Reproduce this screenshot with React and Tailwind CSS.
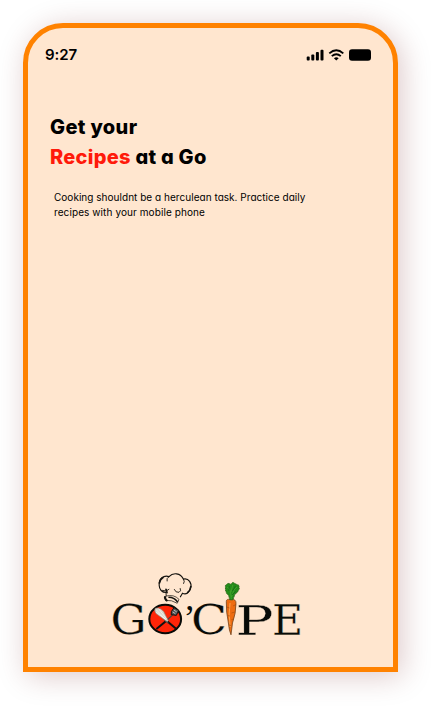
function StatusIcons() {
  return (
    <svg className="h-3.5 w-[66px]" viewBox="0 0 66 14" fill="none" aria-label="Signal, wifi and battery">
      <g fill="#000">
        <rect x="0.7" y="8.6" width="3" height="3.8" rx="0.9" />
        <rect x="5.3" y="6.5" width="3" height="5.9" rx="0.9" />
        <rect x="9.9" y="4.1" width="3" height="8.3" rx="0.9" />
        <rect x="14.5" y="1.8" width="3" height="10.6" rx="0.9" />
        <path d="M30.3 12.4L27.9 10.2Q30.3 8.2 32.7 10.2Z" />
        <rect x="43" y="1.3" width="22" height="11.5" rx="3" />
      </g>
      <path d="M23.3 5.4Q30.3-.8 37.3 5.4M25.8 8.1Q30.3 4.2 34.8 8.1" stroke="#000" strokeWidth="1.9" />
    </svg>
  );
}

function Logo() {
  return (
    <svg className="h-20 w-[205px]" viewBox="0 0 205 80" fill="none" aria-label="Go'cipe">
      <g fill="#080b08" stroke="#ffe6cf" strokeWidth="0.25" fontFamily="'DejaVu Serif', serif" fontSize="41">
        <text transform="translate(5.6 68.6) scale(1.1 1)">G</text>
        <text transform="translate(86.1 68.6) scale(1.15 1)">C</text>
        <text transform="translate(130.4 69.8) scale(1.38 1)">P</text>
        <text transform="translate(167 70) scale(1.04 1.03)">E</text>
      </g>
      <text x="78.4" y="65" fill="#080b08" fontFamily="'Liberation Serif', serif" fontSize="36">’</text>

      <ellipse cx="60.2" cy="54" rx="15.9" ry="14.2" fill="#ff2508" stroke="#080b08" strokeWidth="2" />
      <g strokeLinecap="round">
        <path d="M60.5 56.5L52 63.5M62.5 56.5L70.5 63.2" stroke="#111" strokeWidth="2" />
        <path d="M67.5 50L60.5 56.5M58 53L63 58" stroke="#4b4742" strokeWidth="1.1" />
      </g>
      <path d="M50.3 43.3Q54.8 41.7 58.7 46.4L63.3 55.8Q62.7 57.4 60.5 55.4L51.2 48.7Q48.8 46 50.3 43.3Z" fill="#d8d5c9" stroke="#8b8275" strokeWidth=".6" />
      <path d="M51 44.5L61 55M53.5 43.5L61.5 54M51 47L60 54" stroke="#fff" strokeWidth=".6" />
      <path d="M69 42.7L73.8 45.3L71.3 50.4L66.2 49.6L66.4 46.5Z" fill="#555" stroke="#111" />
      <path d="M68.8 45L71.8 47M67.7 47L70.4 48.7" stroke="#ddd" strokeWidth=".7" />

      <g stroke="#15130f" strokeLinecap="round" strokeLinejoin="round">
        <path d="M61 27.5C57 27.5 54.3 24.5 54.2 20.5C53.5 14 58.5 9.8 64 11.6C68 7.2 75.5 7.8 78.4 14.1C83.8 12.8 87.2 18.4 85.6 23C84.8 27.6 81 30 77.5 28.2L75.4 31.8" strokeWidth="1.15" />
        <path d="M61 27.5L61.2 31M57.5 25.5Q61.5 27.3 64 24.4M64 11.6Q61 13.4 62 16M78.4 14.1Q80.2 16.3 78.7 18.5M69.3 24.5Q70.7 28 74 27.3Q76.5 26.3 75.3 23.5" strokeWidth=".9" />
        <path d="M54.5 18Q55 14.2 58 12.6M82.7 27.4Q85.4 25.5 85.8 21.5M61 24.3L62 27.6" strokeWidth="1.7" />
        <path d="M61.2 31Q69 29 74 34.4L72.4 38M60.5 35.3Q67 34.8 71.8 38" strokeWidth=".7" />
        <path d="M60 32.1Q59.8 34.2 61.6 35.4" strokeWidth="2.3" />
        <path d="M64 32.3Q69 32.4 72.2 36.4" strokeWidth="1.6" />
      </g>

      <path d="M121.3 36.5Q121 33.8 126 34.2Q131.3 34 131 38.5Q131 48 127.5 58L126 69.8Q124.2 66 123.4 58Q121 47 121.3 36.5Z" fill="#ee6b10" stroke="#75441c" strokeWidth=".8" />
      <path d="M125 38Q123.2 48 125.2 62" stroke="#ffb260" strokeWidth=".8" />
      <path d="M121.6 42L124.5 43M131 39.5L128 41M129.8 47L126.5 48M122.5 50.5L125 51M129 54L126.5 54.5M124 60L126 60.5" stroke="#a54a08" strokeWidth=".6" />
      <path d="M125 35L123.6 30.5L121.4 28L120.5 25L120.4 20.5L123 18.3L126 19.2L128 17.3L130.3 18.8L133.8 20.3L134.2 24L132.2 27.5L129.9 29.2L127.9 34.8Z" fill="#258c1a" stroke="#316a1d" strokeWidth="1" strokeDasharray="1.2 .5" />
      <path d="M126.3 34L125.2 25L122.2 22M126.5 32L129 25L132 22M126 27L127.8 20" stroke="#4fae31" strokeWidth=".6" />
      <path d="M124.4 21L123.8 26M130.5 21L127.5 26M130.6 26.4L127 30" stroke="#176916" strokeWidth=".8" />
    </svg>
  );
}

export default function App() {
  return (
    <div className="h-[706px] w-[431px] overflow-hidden bg-white p-[23px] text-black">
      <main className="flex h-[649px] w-[375px] flex-col rounded-t-[40px] border-[5px] border-[#ff8200] bg-[#ffe6cf] shadow-[4px_4px_30px_rgba(100,0,10,0.22)]">
        <header className="flex h-[54px] items-center justify-between pr-[21px] pl-[17px] font-['Inter',sans-serif]">
          <span className="text-[15px] leading-5 font-semibold tracking-[-0.05px]">9:27</span>
          <StatusIcons />
        </header>
        <section className="pt-[30px] pl-[22px] font-['Inter',sans-serif] [font-feature-settings:'cv11']">
          <h1 className="text-[20px] leading-[30px] font-extrabold whitespace-nowrap">
            <span className="block tracking-[0.35px]">Get your</span>
            <span className="block tracking-[0.27px]"><span className="text-[#ff1a0a]">Recipes</span> at a Go</span>
          </h1>
          <p className="mt-[18px] pl-1 text-[10px] leading-[15px] whitespace-nowrap">
            <span className="block tracking-[0.03px]">Cooking shouldnt be a herculean task. Practice daily</span>
            <span className="block tracking-[0.09px]">recipes with your mobile phone</span>
          </p>
        </section>
        <div className="mt-auto mb-[22px] pl-[77px]">
          <Logo />
        </div>
      </main>
    </div>
  );
}
